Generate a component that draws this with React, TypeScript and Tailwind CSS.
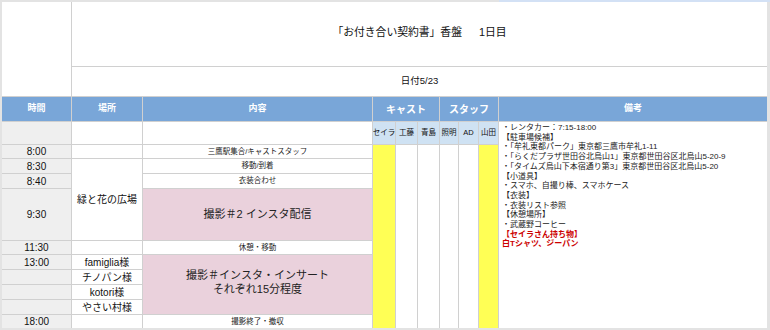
const times = [
  { row: "row-start-5", label: "8:00" },
  { row: "row-start-6", label: "8:30" },
  { row: "row-start-7", label: "8:40" },
  { row: "row-start-8", label: "9:30" },
  { row: "row-start-9", label: "11:30" },
  { row: "row-start-10", label: "13:00" },
  { row: "row-start-11", label: "" },
  { row: "row-start-12", label: "" },
  { row: "row-start-13", label: "" },
  { row: "row-start-14", label: "18:00" },
];

const castCols = [
  { col: "col-start-4", name: "セイラ", yellow: true },
  { col: "col-start-5", name: "工藤", yellow: false },
  { col: "col-start-6", name: "青島", yellow: false },
  { col: "col-start-7", name: "照明", yellow: false },
  { col: "col-start-8", name: "AD", yellow: false },
  { col: "col-start-9", name: "山田", yellow: true },
];

const notes = [
  "・レンタカー：7:15-18:00",
  "【駐車場候補】",
  "・「牟礼東都パーク」東京都三鷹市牟礼1-11",
  "・「らくだプラザ世田谷北烏山1」東京都世田谷区北烏山5-20-9",
  "・「タイムズ烏山下本宿通り第3」東京都世田谷区北烏山5-20",
  "【小道具】",
  "・スマホ、自撮り棒、スマホケース",
  "【衣装】",
  "・衣装リスト参照",
  "【休憩場所】",
  "・武蔵野コーヒー",
];

export default function App() {
  const center = "flex items-center justify-center";
  const head = "flex items-center justify-center bg-[#79a6d8] text-white font-bold";
  const small = "flex items-center justify-center bg-white text-[7.5px] text-[#222]";

  return (
    <div className="w-[770px] h-[330px] overflow-hidden bg-[#e3e3e3] font-['Liberation_Sans','Noto_Sans_CJK_JP',sans-serif] text-[#111]">
      {/* sheet header strip */}
      <div className="flex h-[2px]">
        <div className="w-[499px] bg-[#e3e3e3]" />
        <div className="flex-1 bg-[#d3e1f5]" />
      </div>
      <div className="flex">
        <div className="w-[2px]" />
        <div className="grid grid-cols-[69px_70px_229px_22px_21px_21px_18px_19px_19px_268px] grid-rows-[64px_29px_24px_22px_13px_14px_14px_51px_13px_14px_14px_14px_14px_13px] gap-px bg-[#d0d0d0]">
          {/* title block */}
          <div className="col-start-1 row-start-1 row-span-2 bg-white" />
          <div className={`${center} col-start-2 col-span-9 row-start-1 bg-white text-[10.8px] pb-[3px]`}>
            「お付き合い契約書」香盤<span className="ml-[17px]">1日目</span>
          </div>
          <div className={`${center} col-start-2 col-span-9 row-start-2 bg-white text-[9.5px]`}>日付5/23</div>

          {/* header */}
          <div className={`${head} col-start-1 row-start-3 text-[9px]`}>時間</div>
          <div className={`${head} col-start-2 row-start-3 text-[9px]`}>場所</div>
          <div className={`${head} col-start-3 row-start-3 text-[9px]`}>内容</div>
          <div className={`${head} col-start-4 col-span-3 row-start-3 text-[10px]`}>キャスト</div>
          <div className={`${head} col-start-7 col-span-3 row-start-3 text-[10px]`}>スタッフ</div>
          <div className={`${head} col-start-10 row-start-3 text-[9px]`}>備考</div>

          {/* sub header */}
          <div className="col-start-1 row-start-4 bg-[#efefef]" />
          <div className="col-start-2 row-start-4 bg-white" />
          <div className="col-start-3 row-start-4 bg-white" />
          {castCols.map((c) => (
            <div key={c.name} className={`${center} ${c.col} row-start-4 bg-[#cfe2f3] text-[7.5px] whitespace-nowrap overflow-hidden`}>
              {c.name}
            </div>
          ))}
          {castCols.map((c) => (
            <div
              key={c.name + "-body"}
              className={`${c.col} row-start-5 row-span-10 ${c.yellow ? "bg-[#ffff55]" : "bg-white"}`}
            />
          ))}

          {/* notes */}
          <div className="col-start-10 row-start-4 row-span-11 bg-white pl-[3px] pt-[1px] text-[8px] leading-[9.7px] text-[#222] whitespace-nowrap">
            {notes.map((n) => (
              <div key={n}>{n}</div>
            ))}
            <div className="text-[#cc0000] font-bold">【セイラさん持ち物】</div>
            <div className="text-[#cc0000] font-bold">白Tシャツ、ジーパン</div>
          </div>

          {/* times */}
          {times.map((t) => (
            <div key={t.row} className={`${center} col-start-1 ${t.row} bg-[#efefef] text-[10px]`}>
              {t.label}
            </div>
          ))}

          {/* places */}
          <div className="col-start-2 row-start-5 bg-white" />
          <div className={`${center} col-start-2 row-start-6 row-span-3 bg-white text-[10px]`}>緑と花の広場</div>
          <div className="col-start-2 row-start-9 bg-white" />
          <div className={`${center} col-start-2 row-start-10 bg-white text-[10px]`}>famiglia様</div>
          <div className={`${center} col-start-2 row-start-11 bg-white text-[10px]`}>チノパン様</div>
          <div className={`${center} col-start-2 row-start-12 bg-white text-[10px]`}>kotori様</div>
          <div className={`${center} col-start-2 row-start-13 bg-white text-[10px]`}>やさい村様</div>
          <div className="col-start-2 row-start-14 bg-white" />

          {/* content */}
          <div className={`${small} col-start-3 row-start-5`}>三鷹駅集合/キャストスタッフ</div>
          <div className={`${small} col-start-3 row-start-6`}>移動/到着</div>
          <div className={`${small} col-start-3 row-start-7`}>衣装合わせ</div>
          <div className={`${center} col-start-3 row-start-8 bg-[#ead1dc] text-[11px] text-[#222]`}>撮影＃2 インスタ配信</div>
          <div className={`${small} col-start-3 row-start-9`}>休憩・移動</div>
          <div className="flex flex-col items-center justify-center col-start-3 row-start-10 row-span-4 bg-[#ead1dc] text-[11px] leading-[14px] text-[#222] pb-[6px]">
            <div>撮影＃インスタ・インサート</div>
            <div>それぞれ15分程度</div>
          </div>
          <div className={`${small} col-start-3 row-start-14`}>撮影終了・撤収</div>
        </div>
      </div>
    </div>
  );
}
